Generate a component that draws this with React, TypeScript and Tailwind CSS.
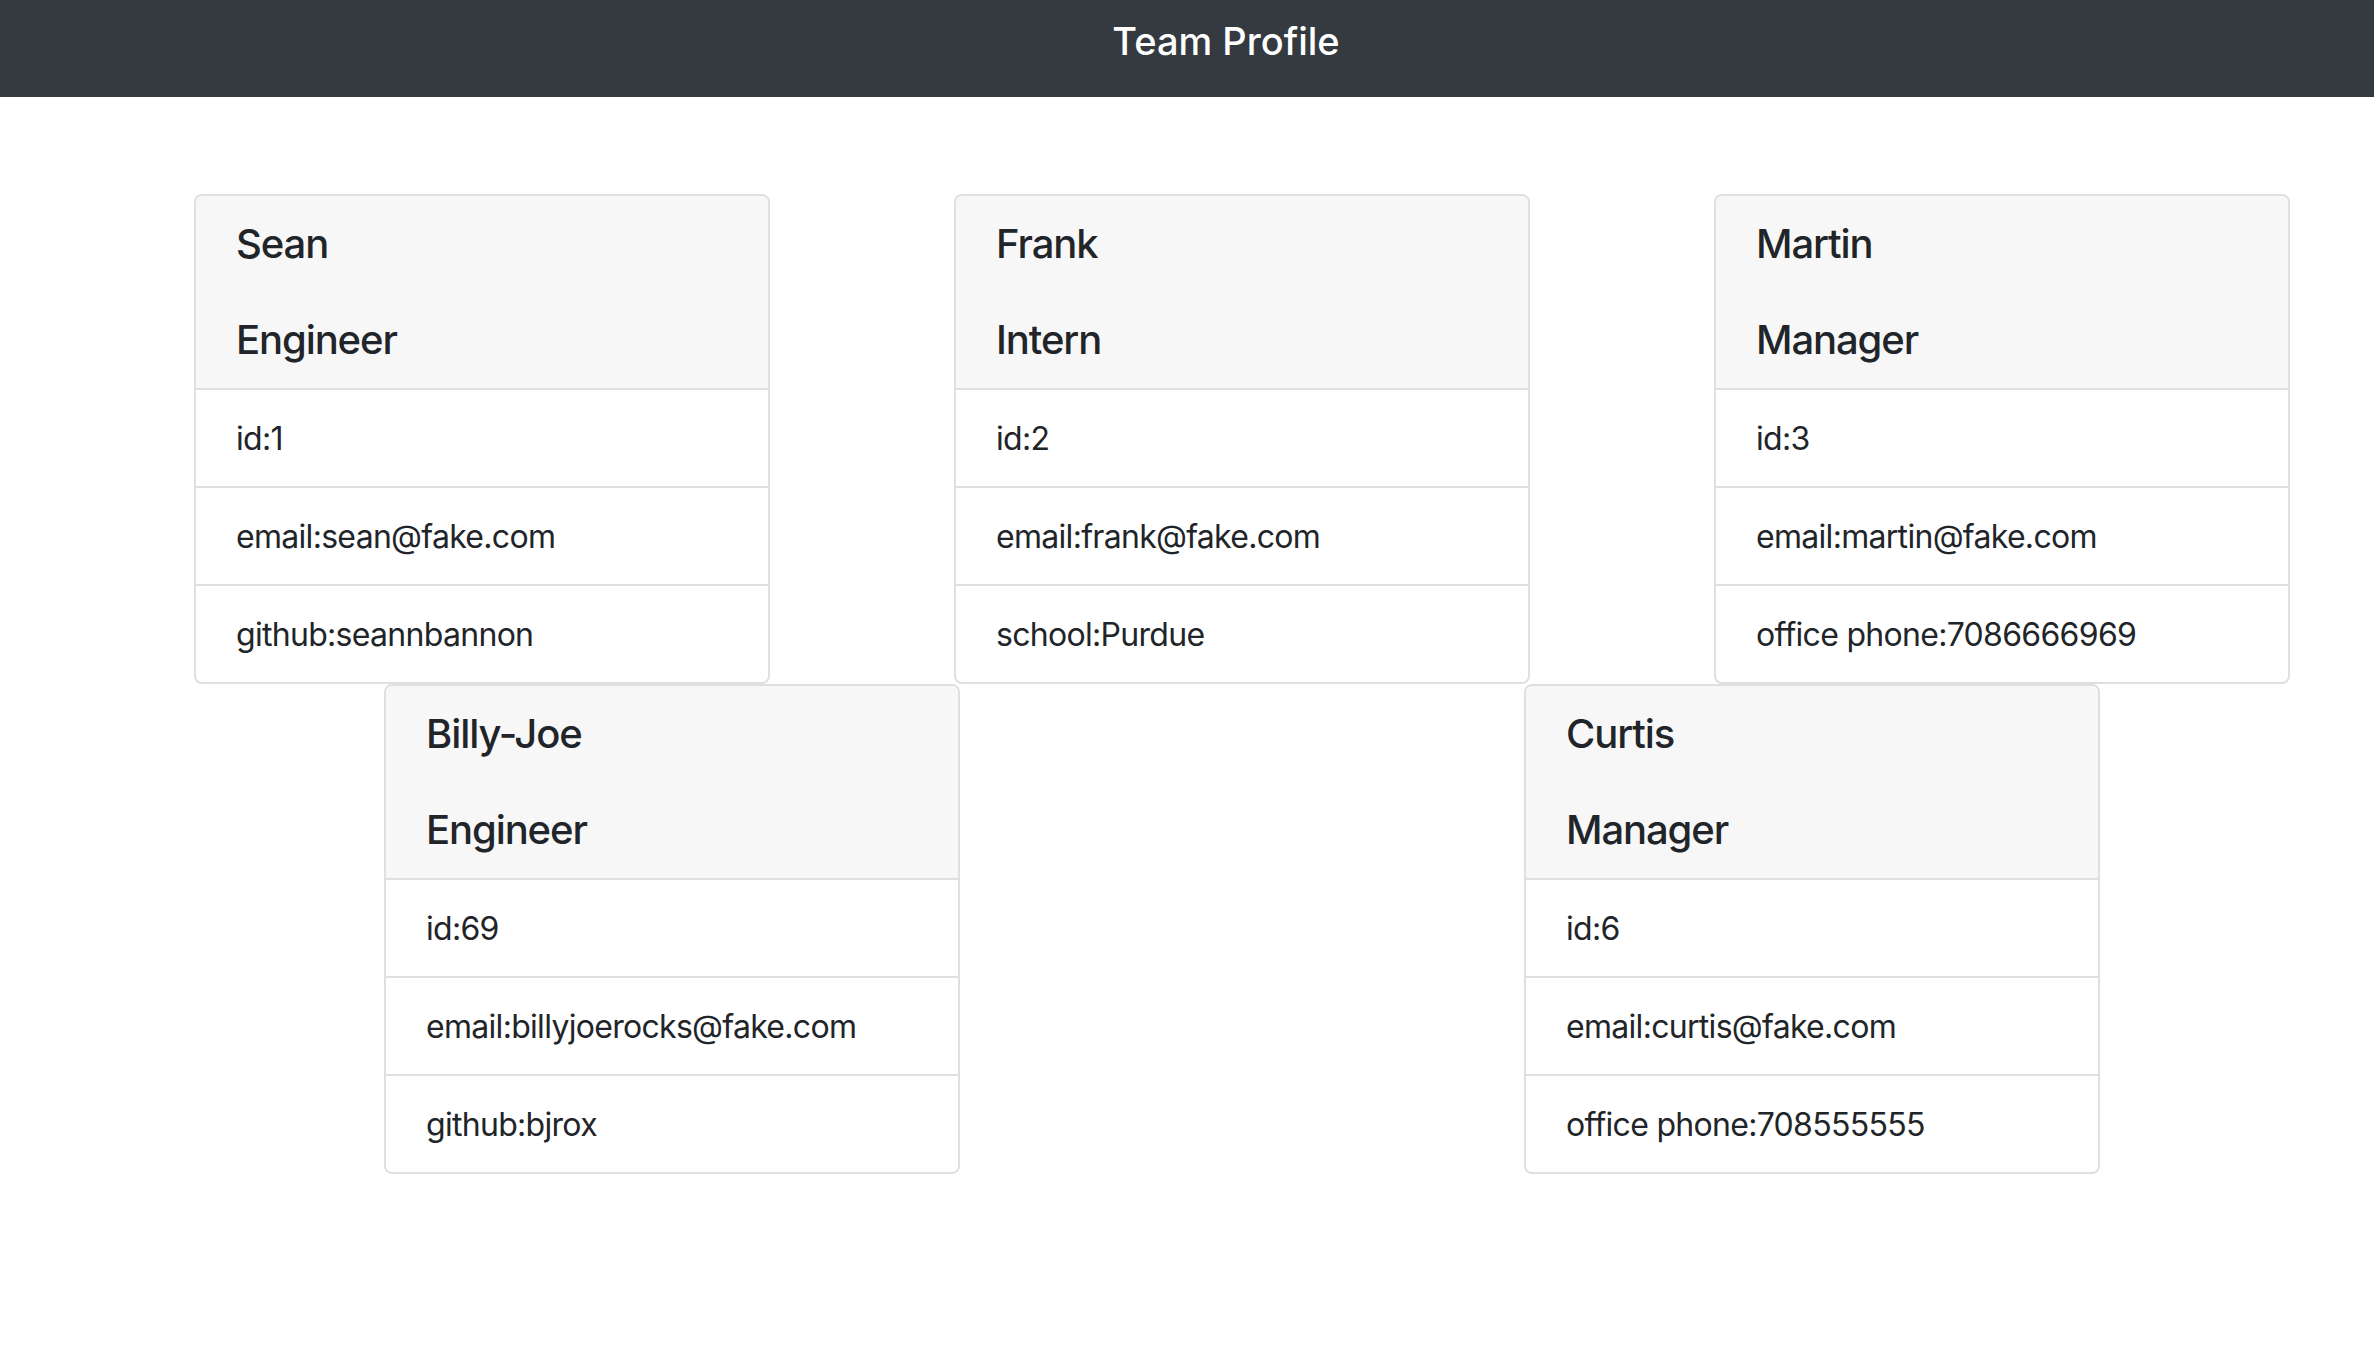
import React from "react";

type Member = { name: string; role: string; rows: string[] };

const members: Member[] = [
  { name: "Sean", role: "Engineer", rows: ["id:1", "email:sean@fake.com", "github:seannbannon"] },
  { name: "Frank", role: "Intern", rows: ["id:2", "email:frank@fake.com", "school:Purdue"] },
  { name: "Martin", role: "Manager", rows: ["id:3", "email:martin@fake.com", "office phone:7086666969"] },
  { name: "Billy-Joe", role: "Engineer", rows: ["id:69", "email:billyjoerocks@fake.com", "github:bjrox"] },
  { name: "Curtis", role: "Manager", rows: ["id:6", "email:curtis@fake.com", "office phone:708555555"] },
];

function Card({ m }: { m: Member }) {
  return (
    <div className="w-[576px] flex flex-col rounded-[8px] border-2 border-[#dfdfdf] bg-white overflow-hidden">
      <div className="bg-[#f7f7f7] border-b-2 border-[#dfdfdf] px-[40px] pt-[24px] pb-[24px]">
        <h2 className="text-[40px] leading-[48px] font-medium tracking-[-1.1px] text-[#212529] mb-[48px]">{m.name}</h2>
        <h3 className="text-[40px] leading-[48px] font-medium tracking-[-1.1px] text-[#212529]">{m.role}</h3>
      </div>
      <ul>
        {m.rows.map((r, i) => (
          <li
            key={i}
            className={
              "px-[40px] pt-[25px] pb-[23px] text-[32px] leading-[48px] tracking-[-0.7px] text-[#212529] " +
              (i < m.rows.length - 1 ? "border-b-2 border-[#dfdfdf]" : "")
            }
          >
            {r}
          </li>
        ))}
      </ul>
    </div>
  );
}

export default function App() {
  return (
    <div className="min-h-screen bg-white overflow-x-hidden font-['Inter','Noto_Sans',sans-serif]">
      <header className="h-[97px] bg-[#343a40] flex justify-center pl-[78px] pt-[17px]">
        <h1 className="text-[38px] leading-[48px] font-medium text-white">Team Profile</h1>
      </header>
      <div className="mt-[97px] ml-[102px] w-[2280px] flex flex-wrap justify-around">
        {members.map((m) => (
          <Card key={m.name} m={m} />
        ))}
      </div>
    </div>
  );
}
